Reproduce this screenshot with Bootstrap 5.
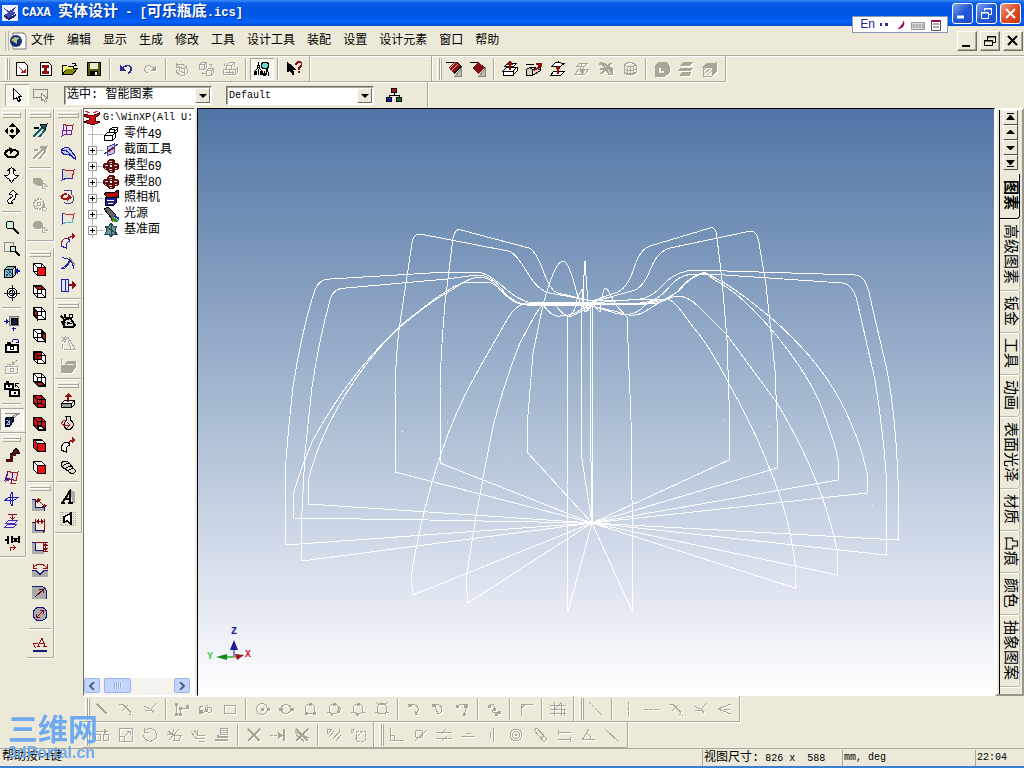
<!DOCTYPE html>
<html lang="zh-CN">
<head>
<meta charset="utf-8">
<meta name="viewport" content="width=device-width, initial-scale=1">
<title>CAXA 实体设计 - [可乐瓶底.ics]</title>
<link href="https://cdn.jsdelivr.net/npm/bootstrap@5.3.0/dist/css/bootstrap.min.css" rel="stylesheet">
<style>
:root{--face:#ece9d8;--shade:#aca899}
body{background:var(--face);color:#000;font:12px/16px "Liberation Mono","Noto Sans CJK SC",monospace;overflow:hidden}
.lat{font-size:10px}
.titlebar{height:26px;background:linear-gradient(#3c8cf8 0,#0a5ce8 12%,#0054e0 50%,#0462fc 85%,#0048c8 100%);color:#fff;font-weight:700;font-size:15px;padding:0 3px 0 2px}
.titlebar .lat{font-size:12px}
.titlebar h1{font:inherit;margin:0;text-shadow:1px 1px 0 #003399;white-space:pre}
.xpbtn{width:21px;height:21px;border:1px solid #fff;border-radius:3px;background:linear-gradient(135deg,#7da4f3,#2458d6 50%,#1c4ccc);color:#fff}
.xpbtn.close-x{background:linear-gradient(135deg,#f0a088,#dd4d28 50%,#c83a14)}
svg{display:block;flex:none}
.ic{width:16px;height:16px;fill:none;stroke:currentColor;shape-rendering:crispEdges}
.menubar{height:30px;border-bottom:1px solid var(--shade);box-shadow:0 1px 0 #fff;padding:0 1px 0 5px}
.menubar a{color:#000;text-decoration:none;padding:0 6px;white-space:nowrap}
.mdibtn{width:20px;height:20px;background:var(--face);border:1px solid;border-color:#fff #716f64 #716f64 #fff;box-shadow:inset -1px -1px 0 var(--shade);border-radius:0}
.hbar{height:26px;padding-right:3px;border-right:1px solid var(--shade);border-bottom:1px solid var(--shade);box-shadow:1px 1px 0 #fff,inset 0 1px 0 #fff}
.hgrip{width:10px;height:22px;padding-left:5px}
.lowbars .hgrip.lead-grip{width:7px;padding-left:2px}
.hgrip::before,.vgrip::before{content:"";display:block;border:1px solid;border-color:#fff var(--shade) var(--shade) #fff}
.hgrip::before{width:5px;height:22px;border-width:0 1px;box-shadow:inset -1px 0 0 #fff}
.hgrip::before{background:linear-gradient(90deg,var(--face) 1px,var(--shade) 1px 2px,#fff 2px)}
.vgrip{height:11px;width:100%;padding:3px 2px 0}
.vgrip::before{height:6px;background:linear-gradient(var(--face) 1px,var(--shade) 1px 2px,#fff 2px 3px,var(--face) 3px)}
.tb{width:24px;height:22px;padding:0;border:0;border-radius:0;display:flex;align-items:center;justify-content:center;flex:none;color:#000}
.tb:disabled{opacity:1;color:#a9a697;border:0}
.tb:disabled svg{filter:drop-shadow(1px 1px 0 #fff)}
.tb.pressed{background:#f6f5ee;box-shadow:inset 1px 1px 0 var(--shade),inset -1px -1px 0 #fff}
.hsep{width:8px;height:22px;padding-left:3px;flex:none}
.hsep::before{content:"";display:block;width:2px;height:100%;border-left:1px solid var(--shade);background:#fff}
.vsep{height:8px;width:100%;padding:3px 2px 0}
.vsep::before{content:"";display:block;height:2px;border-top:1px solid var(--shade);background:#fff}
.vcol{width:28px;padding-top:1px;border-right:1px solid #fff}
.vcol:first-child{width:27px}
.vbar{padding-bottom:2px;border-bottom:1px solid var(--shade);border-right:1px solid var(--shade);box-shadow:0 1px 0 #fff}
.vcol:first-child .vbar{padding-right:2px}
.vbar.spaced{margin-bottom:7px}
.combo{width:148px;height:19px;border:1px solid;border-color:#716f64 #fff #fff #716f64;box-shadow:inset 1px 1px 0 var(--shade);background:#fff}
.combo select{width:100%;height:17px;border:0;padding:0 0 0 2px;font:inherit;line-height:16px;background:transparent;appearance:none;border-radius:0}
.combo select.lat{font-size:10px}
.combo .drop{right:1px;top:1px;width:15px;height:15px;background:var(--face);border:1px solid;border-color:#fff #716f64 #716f64 #fff;pointer-events:none}
.drop::after{content:"";position:absolute;left:3px;top:5px;border:4px solid transparent;border-top-color:#000;border-bottom:0}
.tree{width:112px;background:#fff;border:1px solid;border-color:#716f64 #fff #fff #716f64;overflow:hidden}
.tree ul{margin:0;padding:1px 0 0;list-style:none}
.tree li{height:16px;display:flex;align-items:center;white-space:nowrap;padding-left:4px}
.tree .root{padding:0}
.tree .twig{width:15px;height:16px;background:linear-gradient(90deg,transparent 4px,#bbb 4px 5px,transparent 5px),linear-gradient(transparent 8px,#bbb 8px 9px,transparent 9px)}
.tree .twig b{display:block;width:9px;height:9px;margin-top:4px;border:1px solid #999;background:linear-gradient(#000,#000) 1px 3px/5px 1px no-repeat,linear-gradient(#000,#000) 3px 1px/1px 5px no-repeat,#fff}
.tree li .ic{margin-right:5px}
.tree .root .ic{margin-right:3px}
.tree .lat{font-size:10px}
.tree li .num{font-size:12px;font-family:"Liberation Sans",sans-serif}
.sbar{background:#f4f3ee;height:17px}
.sbtn{width:16px;height:15px;padding:0;border:1px solid #9ab4ee;border-radius:2px;background:#c4d4fc;color:#4d6185;display:flex;align-items:center;justify-content:center}
.thumb{width:27px;height:15px;border:1px solid #98b4f0;border-radius:2px;background:repeating-linear-gradient(90deg,#8ca8ec 0 1px,#e6eefe 1px 2px) center/8px 7px no-repeat,#c4d4fc}
.scene{border:1px solid #000;border-right-color:#fff;border-bottom-color:#fff;background:linear-gradient(#5075a5,#a6b9d1 50%,#dbe2ee 80%,#fff);margin-left:2px}
.scene svg{width:100%;height:100%}
.wire{fill:none;stroke:#fff;stroke-width:1;shape-rendering:crispEdges}
.catalog{width:29px;border:2px solid;border-color:#fff #98958a #98958a #fff;padding-left:2px}
.catalog .strip{border-left:1px solid #000}
.spin{width:15px;height:15px;padding:0;margin-left:3px;background:var(--face);border:1px solid;border-color:#fff #55534b #55534b #fff;border-radius:0;display:flex;align-items:center;justify-content:center}
.vtab{writing-mode:vertical-rl;text-orientation:sideways;width:20px;font-size:15px;line-height:19px;padding:5px 0 6px;border:solid #bdb9aa;border-width:0 1px 1px 0;border-radius:0 0 4px 0;color:#000;background:none;white-space:nowrap;box-shadow:inset -1px 0 0 #fff,0 1px 0 #fff}
.vtab.active{font-weight:700;border-color:#000;padding:6px 0 8px}
.lowbars{margin-left:83px}
.lowbars .hbar{height:26px}
.statusbar{height:18px;padding-left:2px;border-top:1px solid var(--shade)}
.pane{border-left:1px solid var(--shade);padding-left:1px;height:16px;white-space:pre}
.taskedge{height:2px;background:#3a80d0}
.stamp{left:8px;bottom:8px;color:#67a5f2;opacity:.92;font-family:"Liberation Sans","Noto Sans CJK SC",sans-serif;font-weight:700;pointer-events:none}
.stamp div:first-child{font-size:30px;line-height:32px}
.stamp div:last-child{font-size:16px;line-height:14px}
.ime{right:76px;top:16px;height:17px;border:1px solid #8a98b8;background:#fff;color:#2222a0;font:12px/15px "Liberation Sans",sans-serif;padding:0 2px 0 7px;gap:2px}
</style>
</head>
<body class="d-flex flex-column min-vh-100 position-relative">

<svg width="0" height="0" class="position-absolute" aria-hidden="true">
<defs>
<g id="cube"><path d="M1.500 1.500h8l4 4v8h-8l-4-4zM1.500 1.500l4 4h8M5.500 5.500v8M1.500 9.500h8v-8M9.500 9.500l4 4" stroke="#000"/></g>
</defs>
<symbol id="page1" viewBox="0 0 16 16"><path d="M2.500 1.500h8l3 3v10h-11z" fill="#fff"/><path d="M4 6l3 1 2 3 3-3v5H7l1-2z" fill="#c01818" stroke="none"/></symbol>
<symbol id="page2" viewBox="0 0 16 16"><path d="M2.500 1.500h8l3 3v10h-11z" fill="#fff"/><path d="M4 4h7v3H9v3h2v3H4v-3h2V7H4z" fill="#8c1010" stroke="none"/></symbol>
<symbol id="open" viewBox="0 0 16 16"><path d="M.500 13.500v-9h4l1 1h6v3"/><path d="M.500 13.500l4-6h11l-5 6z" fill="#848400"/><path d="M1 5h4l1 1h5v2H4l-3 4z" fill="#ffff84" stroke="none"/><path d="M9.500 2.500h4v2M12 4h3"/></symbol>
<symbol id="save" viewBox="0 0 16 16"><path d="M1.500 1.500h13v13h-13z" fill="#555a00"/><path d="M4 2h8v6H4z" fill="#ece9d8" stroke="none"/><path d="M4 10h8v4H4z" fill="#000" stroke="none"/><path d="M9 11h2v3H9z" fill="#fff" stroke="none"/></symbol>
<symbol id="undo" viewBox="0 0 16 16"><path d="M4 7q7-5 9 0 1 4-3 5" stroke="#2c2c90" stroke-width="1.500"/><path d="M2 4v6h6z" fill="#2c2c90" stroke="none"/></symbol>
<symbol id="redo" viewBox="0 0 16 16"><path d="M12 7q-7-5-9 0-1 4 3 5"/><path d="M14 4v6H8z" fill="currentColor" stroke="none"/></symbol>
<symbol id="spinbox" viewBox="0 0 16 16"><path d="M2 2v4h4M2 5q5-4 9 0 5 6 0 9-7 2-9-5M5 6l5 2v4l-4-2zM10 8l3-3"/></symbol>
<symbol id="boxes" viewBox="0 0 16 16"><path d="M1.500 3.500h5v5h-5zM1.500 3.500l2-2h5l-2 2M8.500 1.500v5l-2 2M8.500 9.500h5v5h-5zM8.500 9.500l2-2h5l-2 2M15.500 7.500v5l-2 2M10.500 3.500h3v2M4.500 10.500v2h3"/></symbol>
<symbol id="boxes2" viewBox="0 0 16 16"><path d="M4.500 4.500h5v4h-5zM4.500 4.500l3-3h5l-3 3M12.500 1.500v4M1.500 8.500h6v5h-6zM7.500 8.500h6v5h-6zM13.500 8.500l2-2v5l-2 2M1.500 5.500l2-3M3 11h9M10 10v3"/></symbol>
<symbol id="finder" viewBox="0 0 16 16"><path d="M4.500 1v3M3.500 4.500h2v2h-2zM3.500 7l-2 3v4M5.500 7l2 3v4M.500 10.500h2v3h-2zM6.500 10.500h2v3h-2zM4.500 8v6M10.500 10v4M12.500 9v5M9.500 12.500h2v2h-2zM14 11v4"/><circle cx="11" cy="4.500" r="3.500" fill="#6ad4d0"/><path d="M13 8v3" stroke-width="2"/></symbol>
<symbol id="ask" viewBox="0 0 16 16"><path d="M1 1v10l3-2 3 5 1-1-2-5h3z" fill="#000"/><path d="M10 4q0-3 3-3t3 3l-3 3v2M13 10v2" stroke="#8c1010" stroke-width="2"/></symbol>
<symbol id="cyl1" viewBox="0 0 16 16"><path d="M15.500 7v8H9z" fill="#b9b5a8" stroke="#888"/><path d="M0 1.500h11l4 4-7 7V8" fill="none"/><path d="M8 1l-6 6 5 5 7-7-3-4z" fill="#8c1818" stroke="none"/><path d="M3 8l6-6M5 10l7-7" stroke="#e8a0a0"/></symbol>
<symbol id="cyl2" viewBox="0 0 16 16"><path d="M15.500 7v8H9z" fill="#b9b5a8" stroke="#888"/><path d="M0 1.500h8"/><path d="M2 7l6-6 7 5-7 7z" fill="#801414" stroke="none"/></symbol>
<symbol id="extr" viewBox="0 0 16 16"><path d="M1 10l4-4h10l-4 4zM1 10v4h10v-4M11 14l4-4V6M3 5l3-3h9l-3 3z" fill="#fff"/><path d="M8 9V2M6 4l2-3 2 3" stroke="#8c1010" stroke-width="2"/></symbol>
<symbol id="swp" viewBox="0 0 16 16"><path d="M0 3.500h8M.500 8.500l3-2 3 2v6h-6zM3.500 6.500l6 0 5 3-8 5M6.500 8.500l8-2v3" fill="#d5d2c4"/><path d="M8 9q5-1 6-7M10 2.500h4.500V6" stroke="#8c1010" stroke-width="2"/></symbol>
<symbol id="loft" viewBox="0 0 16 16"><path d="M2 5l3-3q4-2 6 0h4l-4 3q-4 2-5 0zM1 14l3-4h11l-4 4z" fill="#fff"/><path d="M8 13V5M6 8l2-2 2 2" stroke="#8c1010" stroke-width="2"/></symbol>
<symbol id="loft2" viewBox="0 0 16 16"><path d="M3 5l3-3h8l-3 3zM1 13l4-5h10l-4 5zM11 5l-5 5M8 2l-2 6"/><path d="M6 9l5 0-3 4z" fill="currentColor"/></symbol>
<symbol id="cross" viewBox="0 0 16 16"><path d="M1 3h6l7 5v6M3 1l9 13M13 2L3 13M2 8h10M8 4l6 8" stroke-width="2"/></symbol>
<symbol id="drum" viewBox="0 0 16 16"><path d="M2 4q6-5 12 0v8q-6 4-12 0zM2 4q6 4 12 0M5 5v9M8 6v9M11 5v9M2 8q6 4 12 0M2 11q6 4 12 0"/></symbol>
<symbol id="solid" viewBox="0 0 16 16"><path d="M1 5l4-4h7l3 4v7l-4 3H1zM4 6v6h6V9H7V6z" fill-rule="evenodd" fill="currentColor"/></symbol>
<symbol id="stack" viewBox="0 0 16 16"><path d="M3 4l3-3h9l-3 3zM1 9l2-2h12l-2 2zM2 14l3-3h8l-2 4z" fill="currentColor"/></symbol>
<symbol id="hatch" viewBox="0 0 16 16"><path d="M1 6l4-4h9v9l-4 4H1z"/><path d="M10 6l4-4v9l-4 4zM5 2h9l-4 4H1z" fill="currentColor"/><path d="M2 13l7-6M5 14l5-5M2 9l2-2"/></symbol>
<symbol id="ptr" viewBox="0 0 16 16"><path d="M4.500 1.500v11l3-2 2 4 2-1-2-4h3z" fill="#fff"/></symbol>
<symbol id="rectptr" viewBox="0 0 16 16"><path d="M.500 2.500h14v8h-14z" stroke="#8d8a80"/><path d="M8.500 6.500v7l2-1 2 3 1-1-1-3h2z" fill="#fff" stroke="#8d8a80"/></symbol>
<symbol id="org" viewBox="0 0 16 16"><path d="M8 5v4M3 11V8h10v3"/><path d="M5.500 1.500h5v4h-5z" fill="#a01818"/><path d="M.500 10.500h5v4h-5z" fill="#1818c0"/><path d="M10.500 10.500h5v4h-5z" fill="#187018"/></symbol>
<!-- view navigation -->
<symbol id="pan" viewBox="0 0 16 16"><path d="M8 0L4 4h8zM8 16l-4-4h8zM0 8l4-4v8zM16 8l-4-4v8z" fill="#000" stroke="none"/><path d="M6 8h4M8 6v4" stroke-width="2"/></symbol>
<symbol id="orbit" viewBox="0 0 16 16"><path d="M10 5q5 1 4 4-2 4-7 3-6 0-6-4 1-3 5-3" stroke-width="2"/><path d="M5 2l6 3-5 4z" fill="#000" stroke="none"/></symbol>
<symbol id="dolly" viewBox="0 0 16 16"><path d="M5.500 6.500v-3h-2l4-3 4 3h-2v3l2 2h3l-3 3h-1l-3 4-3-4h-1l-3-3h3z" fill="#fff"/></symbol>
<symbol id="walk" viewBox="0 0 16 16"><path d="M6 15q-4-2-1-5l3-2q2-2-3-3l4-4 4 4h-2q2 4-2 6-3 2 0 3z" fill="#fff"/></symbol>
<symbol id="zoom" viewBox="0 0 16 16"><circle cx="6" cy="6" r="4" fill="#c9ecd8"/><path d="M9 9l6 6" stroke-width="2"/></symbol>
<symbol id="zoomwin" viewBox="0 0 16 16"><path d="M.500 1.500h9v9h-9z" stroke="#908d84"/><circle cx="9" cy="8" r="3" fill="#c9ecd8"/><path d="M11 10l5 5" stroke-width="2"/></symbol>
<symbol id="boxarrow" viewBox="0 0 16 16"><path d="M.500 6.500h8v8h-8zM.500 6.500l3-3h8l-3 3M8.500 14.500l3-3v-8" fill="#7fc0c8"/><path d="M2 8l5 5M2 11l2 2M4 7l4 4M2 13l5-5" stroke="#204080"/><path d="M16 8h-4" stroke="#18189a" stroke-width="2"/><path d="M10 8l4-4v8z" fill="#18189a" stroke="none"/></symbol>
<symbol id="target" viewBox="0 0 16 16"><circle cx="8" cy="8" r="5" fill="#fff"/><circle cx="8" cy="8" r="2.500"/><path d="M8 0v16M0 8h16" stroke="#224"/></symbol>
<symbol id="fit" viewBox="0 0 16 16"><path d="M5.500 1.500h9v9h-9z" fill="#bbb" stroke="#777"/><path d="M7 3h6v6H7z" fill="#102040"/><path d="M0 6.500h4M9.500 16v-4M8 13.500h4" stroke="#18189a"/><path d="M2 4l3 2.500L2 9z" fill="#18189a" stroke="none"/></symbol>
<symbol id="cam" viewBox="0 0 16 16"><path d="M1.500 7.500h12v7h-12zM3 5.500h3v2" stroke-width="2" fill="#fff"/><circle cx="8" cy="11" r="2"/><path d="M8 5q0-4 6-2v3M12 5h3" stroke="#18189a"/></symbol>
<symbol id="camg" viewBox="0 0 16 16"><path d="M1.500 7.500h12v7h-12zM3 5h3v2M8 5l6-4M8 2v3h3"/><circle cx="8" cy="11" r="2"/></symbol>
<symbol id="cam2" viewBox="0 0 16 16"><path d="M1 3h8v5H1zM6 9h9v6H6zM2 1h3" stroke-width="2" fill="#fff"/><circle cx="5" cy="5" r="1"/><circle cx="11" cy="12" r="1"/><path d="M15 7l-4-4M11.500 6V2.500H15"/></symbol>
<symbol id="persp" viewBox="0 0 16 16"><path d="M1 2.500h14l-6 5M15 2L4 8" stroke="#888"/><path d="M1 8l3-2h5v5l-3 4H1z" fill="#182048"/><path d="M2 9h4v5H2z" fill="#9fb4d8" stroke="none"/><path d="M2 10l3 3M5 9l-3 4" stroke="#182048"/></symbol>
<symbol id="crank" viewBox="0 0 16 16"><path d="M2 13h5V7h5" stroke="#501010" stroke-width="3"/><path d="M8 6l4-5 4 5z" fill="#701010"/></symbol>
<symbol id="surf" viewBox="0 0 16 16"><path d="M4 2l5 2 5-1-2 9-5-2-5 2z" fill="#f1d7d7" stroke="#a02030"/><path d="M4 2L1 11l5-2M9 4L7 15" stroke="#2020b0"/><path d="M6 14l6 0" stroke="#c02020"/></symbol>
<symbol id="planes" viewBox="0 0 16 16"><path d="M1 9l5-3h9l-5 3zM8 1v14l-2-4V5z" stroke="#2020b0" fill="#e7e4f6"/></symbol>
<symbol id="plane3" viewBox="0 0 16 16"><path d="M4 1.500h9M8.500 1v5M6 4l2.500 2L11 4" stroke="#901030"/><path d="M1 14l3-3h9l-3 3zM2 10l3-3h9l-3 3z" stroke="#4030b0" fill="#eae2f4"/></symbol>
<symbol id="fx" viewBox="0 0 16 16"><path d="M5 1.500H3.500V9M1 4.500h4M7.500 1v7M10 3l3 4M13 3l-3 4M15 1v7" stroke-width="2"/><path d="M6.500 15.500v-3h4M9 10l2 2.500L9 15" stroke="#8c1010"/></symbol>
<!-- constraints and snapping -->
<symbol id="dart" viewBox="0 0 16 16"><path d="M1 14L11 4M7 14l6-7" stroke="#106070" stroke-width="2"/><path d="M8 2l7-1-2 6z" fill="#106070"/><path d="M2 4.500h5" stroke="#000" stroke-width="2"/></symbol>
<symbol id="dartg" viewBox="0 0 16 16"><path d="M1 14L11 4M7 14l6-7M2 4.500h4" stroke-width="2"/><path d="M8 2l7-1-2 6z" fill="currentColor"/></symbol>
<symbol id="blob" viewBox="0 0 16 16"><path d="M2 3h5l3 2v5H5L1 7z" fill="currentColor"/><path d="M10 7v7l2-1 2 2M10 7l5 4h-3"/></symbol>
<symbol id="ball" viewBox="0 0 16 16"><ellipse cx="6" cy="6" rx="5" ry="4" fill="currentColor"/><path d="M10 7v7l2-1 2 2M10 7l5 4h-3"/></symbol>
<symbol id="gear" viewBox="0 0 16 16"><circle cx="7" cy="7" r="5" stroke-dasharray="2 1" stroke-width="2"/><circle cx="7" cy="7" r="2"/><path d="M10 8v6l2-1 2 2M10 8l5 4"/></symbol>
<symbol id="c1" viewBox="0 0 16 16"><path d="M1.500 1.500h8l4 4v8h-8l-4-4z" fill="#fff"/><use href="#cube"/><path d="M6 6h7v7H6z" fill="#f01010" stroke="none"/></symbol>
<symbol id="c2" viewBox="0 0 16 16"><path d="M1.500 1.500h8l4 4v8h-8l-4-4z" fill="#fff"/><path d="M2 2h8l3 3H5z" fill="#b81818"/><use href="#cube"/></symbol>
<symbol id="c3" viewBox="0 0 16 16"><path d="M1.500 1.500h8l4 4v8h-8l-4-4z" fill="#fff"/><path d="M2 2l3 4v7l-3-4z" fill="#b81818"/><use href="#cube"/></symbol>
<symbol id="c4" viewBox="0 0 16 16"><path d="M1.500 1.500h8l4 4v8h-8l-4-4z" fill="#fff"/><path d="M10 2l3 4v7l-3-4z" fill="#b81818"/><use href="#cube"/></symbol>
<symbol id="c5" viewBox="0 0 16 16"><path d="M1.500 1.500h8l4 4v8h-8l-4-4z" fill="#fff"/><path d="M2 2h7v7H2z" fill="#c01010"/><use href="#cube"/></symbol>
<symbol id="c6" viewBox="0 0 16 16"><path d="M1.500 1.500h8l4 4v8h-8l-4-4z" fill="#fff"/><path d="M2 10h7l4 4H6z" fill="#b81818"/><use href="#cube"/></symbol>
<symbol id="c7" viewBox="0 0 16 16"><path d="M1.500 1.500h8l4 4v8h-8l-4-4z" fill="#c81414"/><use href="#cube"/></symbol>
<symbol id="c8" viewBox="0 0 16 16"><path d="M1.500 1.500h8l4 4v8h-8l-4-4z" fill="#c81414"/><path d="M6 10h4l3 4H6z" fill="#fff"/><use href="#cube"/></symbol>
<symbol id="c9" viewBox="0 0 16 16"><path d="M1.500 1.500h8l4 4v8h-8l-4-4z" fill="#e01414"/><path d="M2 2h8l3 3H5z" fill="#fff"/><path d="M1.500 1.500h8l4 4v8h-8l-4-4zM1.500 1.500l4 4h8M5.500 5.500v8"/></symbol>
<symbol id="c10" viewBox="0 0 16 16"><path d="M1.500 1.500h8l4 4v8h-8l-4-4z" fill="#fff"/><path d="M5.500 5.500h8v8h-8z" fill="#f01010"/><path d="M1.500 1.500h8l4 4v8h-8l-4-4zM1.500 1.500l4 4h8M5.500 5.500v8"/></symbol>
<symbol id="dim1" viewBox="0 0 16 16"><path d="M0 3h3v9h10v3H0z" fill="#aaa" stroke="none"/><path d="M0 3.500h3.500v8h9V15" stroke="#18187a"/><path d="M5 3l8 8M4 6l3-4M11 12l4-3" stroke="#8c1010"/><path d="M5 3h4L5 7zM13 11V7l-4 4z" fill="#8c1010" stroke="none"/></symbol>
<symbol id="dim2" viewBox="0 0 16 16"><path d="M0 4h3v8h9v3H0z" fill="#aaa" stroke="none"/><path d="M0 4.500h3.500v8h8V15" stroke="#18187a"/><path d="M3.500 1v6M12.500 1v13M3 3.500h9" stroke="#8c1010"/><path d="M4 3.500L7 1v5zM12 3.500L9 1v5z" fill="#8c1010" stroke="none"/></symbol>
<symbol id="dim3" viewBox="0 0 16 16"><path d="M0 3h3v8h9v3H0z" fill="#aaa" stroke="none"/><path d="M0 2.500h3.500v8h8v-8" stroke="#18187a"/><path d="M4 2.500h12M11 11.500h5M13.500 3v9" stroke="#8c1010"/><path d="M13.500 3l2.500 3h-5zM13.500 11L16 8h-5z" fill="#8c1010" stroke="none"/></symbol>
<symbol id="dim4" viewBox="0 0 16 16"><path d="M0 8h5l3 4 4-4h4v7H0z" fill="#aaa" stroke="none"/><path d="M0 8.500h4l4 4 4-4h4" stroke="#18187a"/><path d="M1 6q7-8 14 0M1 2v4h4M15 2v4h-4" stroke="#8c1010"/></symbol>
<symbol id="dim5" viewBox="0 0 16 16"><path d="M0 3h8q6 0 6 6v6H0z" fill="#aaa" stroke="none"/><path d="M0 2.500h9q5.500 1 5.500 6V15" stroke="#18187a"/><path d="M3 13l8-7M7 5.500h4.500V9" stroke="#501010"/></symbol>
<symbol id="dim6" viewBox="0 0 16 16"><circle cx="8" cy="8" r="7" fill="#aaa" stroke="#18187a"/><path d="M4 12l8-8M8 4.500h3.500V8M4.500 8v3.500H8" stroke="#8c1010"/></symbol>
<symbol id="dimA" viewBox="0 0 16 16"><path d="M1 14.500h14" stroke="#18187a" stroke-width="2"/><path d="M6 10l4-8 3 8M8 7.500h4M5 10.500h3M11 10.500h4M1 7.500h5M1.500 7.500l2 5" stroke="#8c1010"/></symbol>
<!-- surfaces and solids -->
<symbol id="s1" viewBox="0 0 16 16"><path d="M4 1l3 2 6-1-2 10-5-1-4 2zM7 3L6 11M3 7l4 1 5-1" stroke="#6a2098" fill="#eee4f2"/><path d="M4 1l3 2 6-1-1 5" stroke="#a02040"/></symbol>
<symbol id="s2" viewBox="0 0 16 16"><path d="M1 6q3-5 8-3l6 8v3l-4-3q-3-3-7-1z" fill="#b9c8ea" stroke="#2020a0"/><path d="M1 6q4-2 7 1l6 7" stroke="#2020a0"/></symbol>
<symbol id="s3" viewBox="0 0 16 16"><path d="M3 2l4 2 7-1-2 9-5-1-5 2z" fill="#ddd8cc" stroke="#2020b0"/><path d="M3 2l4 2 7-1M12 12l2-9" stroke="#b02020"/></symbol>
<symbol id="s4" viewBox="0 0 16 16"><path d="M4 1.500h7v3q5 5 1 9-5 3-8 0" stroke="#404090"/><path d="M2 8q0-3 5-3M1 7q1 5 9 2" stroke="#a01818" stroke-width="2"/><path d="M8 5l4 4-5 3z" fill="#a01818" stroke="none"/></symbol>
<symbol id="s5" viewBox="0 0 16 16"><path d="M3 2l4 2 7-1-2 9-5-1-5 2z" stroke="#50b8c8"/><path d="M3 2L2 13" stroke="#2020b0"/><path d="M3 2l4 2 7-1-1 5" stroke="#c03030"/></symbol>
<symbol id="s6" viewBox="0 0 16 16"><path d="M1 13q0-8 7-8l2 3q-4 1-4 7z" fill="#eee" stroke="#2020b0"/><path d="M1 13q0-8 7-8l5-2" stroke="#a01818"/><path d="M12 0l4 3-4 3z" fill="#a01818" stroke="none"/></symbol>
<symbol id="s7" viewBox="0 0 16 16"><path d="M2 3q10-1 12 11M2 13q6-2 8-9M5 13q3-3 6-8M1 13h4" stroke="#2020b0"/><path d="M9 2l6 8" stroke="#888"/></symbol>
<symbol id="s8" viewBox="0 0 16 16"><path d="M1.500 2.500h7v12h-7zM5.500 2v12" stroke="#2020b0" fill="#dfe4f4"/><path d="M9 8h4" stroke="#8c1010" stroke-width="2"/><path d="M12 4l4 4-4 4z" fill="#8c1010" stroke="none"/></symbol>
<symbol id="k1" viewBox="0 0 16 16"><path d="M4 7l6-2 5 7-2 2H4zM1 3l3 3M5 1v4M1 9h4M2 12l3-3M8 4l-2 3" fill="#ddd" stroke-width="2"/><circle cx="11" cy="3" r="2" fill="#fff"/><path d="M7 9l5 2M7 12l2-3"/></symbol>
<symbol id="k2" viewBox="0 0 16 16"><path d="M1 2l5 3M6 1L2 7M4 8l4-6 7 12H4M8 5l3 9M2 9l1 5"/></symbol>
<symbol id="k3" viewBox="0 0 16 16"><path d="M1 8h4l3-4h7v7l-3 4H1zM1 2v5" fill="currentColor"/><path d="M6 7h8" stroke="#ece9d8"/></symbol>
<symbol id="t1" viewBox="0 0 16 16"><path d="M1.500 10.500l3-3h10l-3 3zM11.500 10.500l3-3v4l-3 3z" fill="#fff"/><path d="M1.500 10.500h10v4h-10z" fill="#999"/><path d="M8 9V3" stroke="#8c1010" stroke-width="2"/><path d="M8 0l4 4H4z" fill="#8c1010" stroke="none"/></symbol>
<symbol id="t2" viewBox="0 0 16 16"><path d="M5 1.500h6M6.500 2v3q-5 5 0 9h4q6-4 0-9V2" fill="#ddd"/><path d="M2 8q0-3 5-3M1 7q2 5 8 3M7 7l3 3-3 3" stroke="#a01818"/></symbol>
<symbol id="t3" viewBox="0 0 16 16"><path d="M1 13q0-8 7-8l2 3q-4 1-4 7z" fill="#eee"/><path d="M9 5l4-2" stroke="#a01818" stroke-width="2"/><path d="M12 0l4 3-4 3z" fill="#a01818" stroke="none"/></symbol>
<symbol id="t4" viewBox="0 0 16 16"><path d="M1 4q3-3 7-1l7 8q1 3-3 4L5 10q-4-2-4-6z" fill="#ddd"/><path d="M3 7q2-3 7-2M5 10q2-3 7-2M8 12q2-3 6-2"/></symbol>
<symbol id="ta" viewBox="0 0 16 16"><path d="M11 1l4 2v11h-3z" fill="#aaa" stroke="none"/><path d="M3 13l7-11v11M5 9.500h5M1 13.500h4M8 13.500h5" stroke-width="2"/></symbol>
<symbol id="th" viewBox="0 0 16 16"><path d="M.500 1v14M2.500 1v14M13.500 1v14M15.500 1v14M1 1.500h14M1 14.500h14M5.500 1v14M11.500 1v14" stroke="#aaa" stroke-dasharray="1 1"/><path d="M4 6l7-4v11l-4-3-3 1z" fill="#fff" stroke-width="1.500"/></symbol>
<!-- tree -->
<symbol id="scene" viewBox="0 0 16 16"><path d="M0 4l8 2 7-3v2l-4 3v3l5 1-7 3-9-3 5-2V8L0 6z" fill="#d01010" stroke="#400"/><path d="M1 1l5 2M14 1l-5 2" stroke="#c33"/></symbol>
<symbol id="part" viewBox="0 0 16 16"><path d="M1.500 9.500l3-3h2v-3l3-2h5v4l-2 2v4l-3 3h-8zM1.500 9.500h8v5M9.500 9.500l3-3M6.500 6.500h4l4-4M6.500 3.500h5l0 3" fill="#fff"/></symbol>
<symbol id="sect" viewBox="0 0 16 16"><path d="M4 5l7-3v9l-7 3z" fill="#c9bcec" stroke="#55408c"/><path d="M1 12L15 2" stroke="#203060"/><path d="M5 10l6-4" stroke="#a01818"/></symbol>
<symbol id="model" viewBox="0 0 16 16"><path d="M6 1h4l2 2v2l-2 2H6L4 5V3zM1 5h3l3 2v3l-2 2H2L0 9V6zM11 5h3l2 2v3l-2 2h-3L9 9V7zM6 9h4l2 2v2l-2 2H6l-2-2v-2z" fill="#5c1010" stroke="none"/><path d="M6 3h3M2 7h3M11 7h3M6 11h3M7 5h2M2 10h1M12 10h2M7 13h2" stroke="#e9c4c4"/></symbol>
<symbol id="camera" viewBox="0 0 16 16"><path d="M1 4l3-2h8l3-2v7H4z" fill="#b01010"/><path d="M2 8l11-1v6l-2 2H2z" fill="#2020a0"/><path d="M4 10.500h7M5 13.500h5" stroke="#fff"/></symbol>
<symbol id="light" viewBox="0 0 16 16"><path d="M1 3l4-2 8 8-4 4z" fill="#666"/><path d="M9 13l5 3M10 12l5 3" stroke="#20a020" stroke-width="2"/><path d="M12 10l4 3" stroke="#2020d0" stroke-width="2"/><path d="M8 13l2 3" stroke="#d02020"/></symbol>
<symbol id="datum" viewBox="0 0 16 16"><path d="M8 1l2 3h4l-2 4 2 4h-4l-2 3-2-3H2l2-4-2-4h4z" fill="#6c9498" stroke="#20484c"/><path d="M8 1v14M2 4l12 8" stroke="#20484c"/></symbol>
<!-- 2D drawing -->
<symbol id="d1" viewBox="0 0 16 16"><path d="M3 3l10 10" stroke-width="1.500"/></symbol>
<symbol id="d2" viewBox="0 0 16 16"><path d="M1 3.500h4l8 8M10 4L4 10M11 13.500h2M14 14.500h1"/></symbol>
<symbol id="d3" viewBox="0 0 16 16"><path d="M15 2L9 8M9 9.500H3M8 8L2 5M9 8l3 4"/></symbol>
<symbol id="d4" viewBox="0 0 16 16"><path d="M2.500 3v10.500h4v-6h8V4"/><path d="M1 2h3v3H1zM1 12h3v3H1zM5 12h3v3H5zM5 6h3v3H5zM12 4h3v3h-3z" fill="currentColor" stroke="none"/></symbol>
<symbol id="d5" viewBox="0 0 16 16"><path d="M2 10q3 4 6-1t6-1q0 5-4 3-5-4 0-7M5 5q-5 1-3 5"/><path d="M1 9h3v3H1zM7 8h2v2H7z" fill="currentColor"/></symbol>
<symbol id="d6" viewBox="0 0 16 16"><path d="M2.500 4.500h11v8h-11z"/></symbol>
<symbol id="r1" viewBox="0 0 16 16"><circle cx="8" cy="8" r="5.500"/><path d="M7 7h2v2H7zM13 7h2v2h-2z" fill="currentColor"/></symbol>
<symbol id="r2" viewBox="0 0 16 16"><ellipse cx="8" cy="8" rx="5" ry="4.500"/><path d="M1 7h3v2H1zM12 7h3v2h-3z" fill="currentColor"/></symbol>
<symbol id="r3" viewBox="0 0 16 16"><circle cx="8" cy="8" r="5"/><path d="M7 2h2v2H7zM3 11h2v2H3zM11 11h2v2h-2z" fill="currentColor"/></symbol>
<symbol id="r4" viewBox="0 0 16 16"><circle cx="8" cy="8" r="5"/><path d="M7 2h2v2H7zM11 9h2v2h-2z" fill="currentColor"/><path d="M1 11.500h3l3 3M13 6l2 3"/></symbol>
<symbol id="r5" viewBox="0 0 16 16"><circle cx="8" cy="8" r="5"/><path d="M7 2h2v2H7z" fill="currentColor"/><path d="M1 11.500h4l3 3M11 11.500h4M8.500 13v2"/></symbol>
<symbol id="r6" viewBox="0 0 16 16"><circle cx="8" cy="8" r="5"/><path d="M2 1l3 3M14 1l-3 3M1 11.500h3.500V14M15 11.500h-3.500V14M5 2.500h6"/></symbol>
<symbol id="a1" viewBox="0 0 16 16"><path d="M3 4q7-2 9 3 1 4-3 6M9 10v3h3"/><path d="M2 3h3v2H2z" fill="currentColor"/></symbol>
<symbol id="a2" viewBox="0 0 16 16"><path d="M3 4q7-2 9 3 0 5-4 6L5 5M6 8l2 5"/><path d="M2 3h3v2H2z" fill="currentColor"/></symbol>
<symbol id="a3" viewBox="0 0 16 16"><path d="M3 5q5-3 9-1 1 4-2 9"/><path d="M10 3h3v3h-3zM2 4h2v2H2zM9 12h2v2H9z" fill="currentColor"/></symbol>
<symbol id="sp" viewBox="0 0 16 16"><path d="M3 5q3-4 5 0t-2 5q4 4 7 0"/><path d="M2 4h2v2H2zM7 7h2v2H7zM12 10h2v2h-2zM9 12h2v2H9z" fill="currentColor"/></symbol>
<symbol id="fil" viewBox="0 0 16 16"><path d="M3.500 15V3.500H15M3 10q1-6 7-7"/></symbol>
<symbol id="grid" viewBox="0 0 16 16"><path d="M0 4.500h16M0 8.500h16M0 12.500h16M4.500 1v14M11.500 1v14M4 9l8-8M14 9v6"/></symbol>
<symbol id="dash1" viewBox="0 0 16 16"><path d="M1 1l14 14" stroke-dasharray="3 1"/></symbol>
<symbol id="dash2" viewBox="0 0 16 16"><path d="M8.500 1v14" stroke-dasharray="4 1"/></symbol>
<symbol id="dash3" viewBox="0 0 16 16"><path d="M0 8.500h16" stroke-dasharray="4 1"/></symbol>
<symbol id="ang" viewBox="0 0 16 16"><path d="M15 3L2 8l13 5M8 8.500h6"/></symbol>
<symbol id="e1" viewBox="0 0 16 16"><path d="M1.500 7.500h5v6h-5zM9.500 7.500h5v6h-5zM2 4.500h9"/><path d="M10 2l4 2.500L10 7z" fill="currentColor" stroke="none"/></symbol>
<symbol id="e2" viewBox="0 0 16 16"><path d="M1.500 1.500h13v13h-13zM1.500 9.500h5v5M7 9l5-5M9 4.500h3.500V8"/></symbol>
<symbol id="e3" viewBox="0 0 16 16"><path d="M3 4q5-5 10 0 4 6-1 9-5 3-9-1l-2-4M2.500 1v4.500H7"/></symbol>
<symbol id="e4" viewBox="0 0 16 16"><path d="M3 13L13 2M1 7.500h5L8 2M2 4l4 3M8 13.500h5l2-5H9z"/></symbol>
<symbol id="e5" viewBox="0 0 16 16"><path d="M1 5l5 6.500h9M4 3l4 5.500h7M7 3v5M9 14.500h6"/></symbol>
<symbol id="e6" viewBox="0 0 16 16"><path d="M6.500 1.500h7v6h-7zM7 3.500h6M7 5.500h6"/><path d="M3 10h11M1 13h13" stroke-width="2"/><path d="M3 8l3 2" /></symbol>
<symbol id="xx" viewBox="0 0 16 16"><path d="M2 2l12 12M14 2L2 14" stroke-width="1.500"/></symbol>
<symbol id="ext" viewBox="0 0 16 16"><path d="M0 8.500h10" stroke-dasharray="3 1"/><path d="M14 2v12" stroke-width="2"/><path d="M8 5l5 3.500L8 12z" fill="currentColor" stroke="none"/></symbol>
<symbol id="xx2" viewBox="0 0 16 16"><path d="M2 2l12 12M14 2L2 14M1 5l14 6M2 8l8 6" stroke-width="1.500"/></symbol>
<symbol id="pr1" viewBox="0 0 16 16"><path d="M1 2h5L2 7zM3 10l5-6M7 12l7-8M10 14l5-6M13 2v4"/></symbol>
<symbol id="pr2" viewBox="0 0 16 16"><path d="M1 2h4L2 6zM6 4h9v10H6zM5 12l7-7" stroke-dasharray="3 1"/></symbol>
<symbol id="q1" viewBox="0 0 16 16"><path d="M2.500 1v12.500H16M2 8.500h4.500v5"/></symbol>
<symbol id="q2" viewBox="0 0 16 16"><circle cx="7" cy="7" r="4"/><path d="M3 14L15 3"/></symbol>
<symbol id="q3" viewBox="0 0 16 16"><path d="M0 5.500h16M0 11.500h16M5 7l5-5M6 14l5-5"/></symbol>
<symbol id="q4" viewBox="0 0 16 16"><path d="M1 9.500h14M6 6.500h5"/></symbol>
<symbol id="q5" viewBox="0 0 16 16"><path d="M9.500 1v14M6.500 5v6"/></symbol>
<symbol id="q6" viewBox="0 0 16 16"><circle cx="8" cy="8" r="6"/><circle cx="8" cy="8" r="3.500"/><circle cx="8" cy="8" r="1"/></symbol>
<symbol id="q7" viewBox="0 0 16 16"><path d="M2 3l3-2 10 11-3 3zM6 3l3 3M5 7l4 4 3-2"/></symbol>
<symbol id="q8" viewBox="0 0 16 16"><path d="M2 5.500h13M2 12.500h13M2 3v5M14 10v5"/></symbol>
<symbol id="q9" viewBox="0 0 16 16"><path d="M2 13L9 2M2 12.500h13M7 6q4 3 4 7"/></symbol>
<symbol id="q10" viewBox="0 0 16 16"><path d="M1 2l14 13"/></symbol>
</svg>

<header class="titlebar d-flex align-items-center">
  <svg class="ic me-1" viewBox="0 0 16 16"><path d="M0 0h16v16H0z" fill="#e9edff" stroke="none"/><path d="M2 3l5 3 7-4-3 5 3 1-7 5-5-3 4-2z" fill="#3c4ab0" stroke="none"/><path d="M2 11l5 3 7-4" stroke="#20206c" stroke-width="2"/></svg>
  <h1><span class="lat">CAXA </span>实体设计<span class="lat"> - [</span>可乐瓶底<span class="lat">.ics]</span></h1>
  <div class="d-flex ms-auto" style="gap:3px">
    <button class="btn p-0 xpbtn" aria-label="最小化"><svg viewBox="0 0 19 19"><path d="M4 13h7" stroke="#fff" stroke-width="3"/></svg></button>
    <button class="btn p-0 xpbtn" aria-label="还原"><svg viewBox="0 0 19 19" fill="none" stroke="#fff"><path d="M7.500 7V4.500h7v6H12M4.500 8.500h7v6h-7zM7 5h8M4 9h8"/></svg></button>
    <button class="btn p-0 xpbtn close-x" aria-label="关闭"><svg viewBox="0 0 19 19"><path d="M5 5l9 9M14 5l-9 9" stroke="#fff" stroke-width="2"/></svg></button>
  </div>
</header>

<nav class="menubar d-flex align-items-center" aria-label="菜单">
  <svg width="22" height="20" viewBox="0 0 22 20"><path d="M.5 0v20M3.500 0v20" stroke="#bdb9aa"/><path d="M8 2h11l2 3v13H8z" fill="#fff" stroke="#777"/><circle cx="11" cy="10" r="6" fill="#18307c"/><path d="M6 9l4-3 5 1-3 2v4l-3-2z" fill="#b9c870"/></svg>
  <a href="#" class="ps-1">文件</a><a href="#">编辑</a><a href="#">显示</a><a href="#">生成</a><a href="#">修改</a><a href="#">工具</a><a href="#">设计工具</a><a href="#">装配</a><a href="#">设置</a><a href="#">设计元素</a><a href="#">窗口</a><a href="#">帮助</a>
  <div class="d-flex ms-auto" style="gap:3px">
    <button class="btn p-0 mdibtn" aria-label="最小化文档"><svg viewBox="0 0 18 18"><path d="M4 14h8" stroke="#000" stroke-width="2"/></svg></button>
    <button class="btn p-0 mdibtn" aria-label="还原文档"><svg viewBox="0 0 18 18" fill="none" stroke="#000"><path d="M6.500 8V4.500h8v6H12M3.500 8.500h8v5h-8zM6 5h9M3 9h9"/></svg></button>
    <button class="btn p-0 mdibtn" aria-label="关闭文档"><svg viewBox="0 0 18 18"><path d="M4 4l9 9M13 4l-9 9" stroke="#000" stroke-width="2"/></svg></button>
  </div>
</nav>

<div class="d-flex" role="toolbar" aria-label="标准">
  <div class="hbar d-flex align-items-center">
    <span class="hgrip"></span>
    <button class="btn tb" aria-label="新建设计"><svg class="ic"><use href="#page1"/></svg></button>
    <button class="btn tb" aria-label="新建图纸"><svg class="ic"><use href="#page2"/></svg></button>
    <button class="btn tb" aria-label="打开"><svg class="ic"><use href="#open"/></svg></button>
    <button class="btn tb" aria-label="保存"><svg class="ic"><use href="#save"/></svg></button>
    <span class="hsep"></span>
    <button class="btn tb" aria-label="撤销"><svg class="ic"><use href="#undo"/></svg></button>
    <button class="btn tb" aria-label="重做" disabled><svg class="ic"><use href="#redo"/></svg></button>
    <span class="hsep"></span>
    <button class="btn tb" aria-label="三维球" disabled><svg class="ic"><use href="#spinbox"/></svg></button>
    <button class="btn tb" aria-label="装配" disabled><svg class="ic"><use href="#boxes"/></svg></button>
    <button class="btn tb" aria-label="解除装配" disabled><svg class="ic"><use href="#boxes2"/></svg></button>
    <span class="hsep"></span>
    <button class="btn tb pressed" aria-label="设计树"><svg class="ic"><use href="#finder"/></svg></button>
    <span class="hsep"></span>
    <button class="btn tb" aria-label="帮助"><svg class="ic"><use href="#ask"/></svg></button>
  </div>
  <div class="hbar" style="width:122px"></div>
  <div class="hbar d-flex align-items-center">
    <span class="hgrip"></span>
    <button class="btn tb" aria-label="圆角过渡"><svg class="ic"><use href="#cyl1"/></svg></button>
    <button class="btn tb" aria-label="边倒角"><svg class="ic"><use href="#cyl2"/></svg></button>
    <span class="hsep"></span>
    <button class="btn tb" aria-label="拉伸面"><svg class="ic"><use href="#extr"/></svg></button>
    <button class="btn tb" aria-label="拔模"><svg class="ic"><use href="#swp"/></svg></button>
    <button class="btn tb" aria-label="移动面"><svg class="ic"><use href="#loft"/></svg></button>
    <button class="btn tb" aria-label="等距面" disabled><svg class="ic"><use href="#loft2"/></svg></button>
    <button class="btn tb" aria-label="删除面" disabled><svg class="ic"><use href="#cross"/></svg></button>
    <button class="btn tb" aria-label="编辑半径" disabled><svg class="ic"><use href="#drum"/></svg></button>
    <span class="hsep"></span>
    <button class="btn tb" aria-label="抽壳" disabled><svg class="ic"><use href="#solid"/></svg></button>
    <button class="btn tb" aria-label="分裂" disabled><svg class="ic"><use href="#stack"/></svg></button>
    <button class="btn tb" aria-label="剖视" disabled><svg class="ic"><use href="#hatch"/></svg></button>
  </div>
</div>

<div class="d-flex">
  <div class="hbar d-flex align-items-center border-bottom-0" style="width:428px;padding-left:5px">
    <button class="btn tb pressed" aria-label="选择"><svg class="ic"><use href="#ptr"/></svg></button>
    <button class="btn tb" aria-label="框选"><svg class="ic"><use href="#rectptr"/></svg></button>
    <div class="combo position-relative" style="margin-left:11px"><select aria-label="选择方式"><option>选中: 智能图素</option></select><span class="drop position-absolute"></span></div>
    <div class="combo position-relative" style="margin:0 8px 0 14px"><select aria-label="配置" class="lat"><option>Default</option></select><span class="drop position-absolute"></span></div>
    <button class="btn tb" aria-label="结构"><svg class="ic"><use href="#org"/></svg></button>
  </div>
</div>

<main class="d-flex flex-grow-1">
  <div class="d-flex align-items-start">
    <div class="vcol">
      <div class="vbar d-flex flex-column align-items-center">
        <span class="vgrip"></span>
        <button class="btn tb" aria-label="平移"><svg class="ic"><use href="#pan"/></svg></button>
        <button class="btn tb" aria-label="旋转"><svg class="ic"><use href="#orbit"/></svg></button>
        <button class="btn tb" aria-label="前后缩放"><svg class="ic"><use href="#dolly"/></svg></button>
        <button class="btn tb" aria-label="任意视向"><svg class="ic"><use href="#walk"/></svg></button>
        <span class="vsep"></span>
        <button class="btn tb" aria-label="缩放"><svg class="ic"><use href="#zoom"/></svg></button>
        <button class="btn tb" aria-label="窗口缩放"><svg class="ic"><use href="#zoomwin"/></svg></button>
        <button class="btn tb" aria-label="指定面"><svg class="ic"><use href="#boxarrow"/></svg></button>
        <button class="btn tb" aria-label="指定中心"><svg class="ic"><use href="#target"/></svg></button>
        <span class="vsep"></span>
        <button class="btn tb" aria-label="全屏显示"><svg class="ic"><use href="#fit"/></svg></button>
        <button class="btn tb" aria-label="保存视向"><svg class="ic"><use href="#cam"/></svg></button>
        <button class="btn tb" aria-label="恢复视向" disabled><svg class="ic"><use href="#camg"/></svg></button>
        <button class="btn tb" aria-label="取消视向"><svg class="ic"><use href="#cam2"/></svg></button>
        <span class="vsep"></span>
        <button class="btn tb pressed" aria-label="透视"><svg class="ic"><use href="#persp"/></svg></button>
      </div>
      <div class="vbar d-flex flex-column align-items-center">
        <span class="vgrip"></span>
        <button class="btn tb" aria-label="三维曲线"><svg class="ic"><use href="#crank"/></svg></button>
        <button class="btn tb" aria-label="曲面"><svg class="ic"><use href="#surf"/></svg></button>
        <button class="btn tb" aria-label="基准"><svg class="ic"><use href="#planes"/></svg></button>
        <button class="btn tb" aria-label="等距平面"><svg class="ic"><use href="#plane3"/></svg></button>
        <button class="btn tb" aria-label="公式曲线"><svg class="ic"><use href="#fx"/></svg></button>
      </div>
    </div>
    <div class="vcol">
      <div class="vbar spaced d-flex flex-column align-items-center">
        <span class="vgrip"></span>
        <button class="btn tb" aria-label="无约束装配"><svg class="ic"><use href="#dart"/></svg></button>
        <button class="btn tb" aria-label="约束装配" disabled><svg class="ic"><use href="#dartg"/></svg></button>
        <span class="vsep"></span>
        <button class="btn tb" aria-label="拾取零件" disabled><svg class="ic"><use href="#blob"/></svg></button>
        <button class="btn tb" aria-label="拾取特征" disabled><svg class="ic"><use href="#gear"/></svg></button>
        <button class="btn tb" aria-label="拾取面" disabled><svg class="ic"><use href="#ball"/></svg></button>
      </div>
      <div class="vbar d-flex flex-column align-items-center">
        <span class="vgrip"></span>
        <button class="btn tb" aria-label="主视图"><svg class="ic"><use href="#c1"/></svg></button>
        <button class="btn tb" aria-label="俯视图"><svg class="ic"><use href="#c2"/></svg></button>
        <button class="btn tb" aria-label="左视图"><svg class="ic"><use href="#c3"/></svg></button>
        <button class="btn tb" aria-label="右视图"><svg class="ic"><use href="#c4"/></svg></button>
        <button class="btn tb" aria-label="后视图"><svg class="ic"><use href="#c5"/></svg></button>
        <button class="btn tb" aria-label="仰视图"><svg class="ic"><use href="#c6"/></svg></button>
        <button class="btn tb" aria-label="轴测图一"><svg class="ic"><use href="#c7"/></svg></button>
        <button class="btn tb" aria-label="轴测图二"><svg class="ic"><use href="#c8"/></svg></button>
        <button class="btn tb" aria-label="轴测图三"><svg class="ic"><use href="#c9"/></svg></button>
        <button class="btn tb" aria-label="轴测图四"><svg class="ic"><use href="#c10"/></svg></button>
      </div>
      <div class="vbar d-flex flex-column align-items-center">
        <span class="vgrip"></span>
        <button class="btn tb" aria-label="线性标注"><svg class="ic"><use href="#dim1"/></svg></button>
        <button class="btn tb" aria-label="水平标注"><svg class="ic"><use href="#dim2"/></svg></button>
        <button class="btn tb" aria-label="垂直标注"><svg class="ic"><use href="#dim3"/></svg></button>
        <button class="btn tb" aria-label="角度标注"><svg class="ic"><use href="#dim4"/></svg></button>
        <button class="btn tb" aria-label="半径标注"><svg class="ic"><use href="#dim5"/></svg></button>
        <button class="btn tb" aria-label="直径标注"><svg class="ic"><use href="#dim6"/></svg></button>
        <span class="vsep"></span>
        <button class="btn tb" aria-label="文字标注"><svg class="ic"><use href="#dimA"/></svg></button>
      </div>
    </div>
    <div class="vcol">
      <div class="vbar d-flex flex-column align-items-center">
        <span class="vgrip"></span>
        <button class="btn tb" aria-label="网格面"><svg class="ic"><use href="#s1"/></svg></button>
        <button class="btn tb" aria-label="放样面"><svg class="ic"><use href="#s2"/></svg></button>
        <button class="btn tb" aria-label="直纹面"><svg class="ic"><use href="#s3"/></svg></button>
        <button class="btn tb" aria-label="旋转面"><svg class="ic"><use href="#s4"/></svg></button>
        <button class="btn tb" aria-label="边界面"><svg class="ic"><use href="#s5"/></svg></button>
        <button class="btn tb" aria-label="导动面"><svg class="ic"><use href="#s6"/></svg></button>
        <button class="btn tb" aria-label="曲面过渡"><svg class="ic"><use href="#s7"/></svg></button>
        <button class="btn tb" aria-label="曲面延伸"><svg class="ic"><use href="#s8"/></svg></button>
      </div>
      <div class="vbar d-flex flex-column align-items-center">
        <span class="vgrip"></span>
        <button class="btn tb" aria-label="钣金"><svg class="ic"><use href="#k1"/></svg></button>
        <button class="btn tb" aria-label="展开" disabled><svg class="ic"><use href="#k2"/></svg></button>
        <button class="btn tb" aria-label="布尔运算" disabled><svg class="ic"><use href="#k3"/></svg></button>
      </div>
      <div class="vbar d-flex flex-column align-items-center">
        <span class="vgrip"></span>
        <button class="btn tb" aria-label="拉伸"><svg class="ic"><use href="#t1"/></svg></button>
        <button class="btn tb" aria-label="旋转特征"><svg class="ic"><use href="#t2"/></svg></button>
        <button class="btn tb" aria-label="扫描"><svg class="ic"><use href="#t3"/></svg></button>
        <button class="btn tb" aria-label="放样"><svg class="ic"><use href="#t4"/></svg></button>
        <span class="vsep"></span>
        <button class="btn tb" aria-label="文字"><svg class="ic"><use href="#ta"/></svg></button>
        <button class="btn tb" aria-label="二维草图"><svg class="ic"><use href="#th"/></svg></button>
      </div>
    </div>
  </div>

  <aside class="tree d-flex flex-column">
    <ul class="flex-grow-1">
      <li class="root"><svg class="ic"><use href="#scene"/></svg><span class="lat">G:\WinXP(All U:</span></li>
      <li><span class="twig"></span><svg class="ic"><use href="#part"/></svg>零件<span class="num">49</span></li>
      <li><span class="twig"><b></b></span><svg class="ic"><use href="#sect"/></svg>截面工具</li>
      <li><span class="twig"><b></b></span><svg class="ic"><use href="#model"/></svg>模型<span class="num">69</span></li>
      <li><span class="twig"><b></b></span><svg class="ic"><use href="#model"/></svg>模型<span class="num">80</span></li>
      <li><span class="twig"><b></b></span><svg class="ic"><use href="#camera"/></svg>照相机</li>
      <li><span class="twig"><b></b></span><svg class="ic"><use href="#light"/></svg>光源</li>
      <li><span class="twig"><b></b></span><svg class="ic"><use href="#datum"/></svg>基准面</li>
    </ul>
    <div class="sbar d-flex align-items-start me-1">
      <button class="btn sbtn" aria-label="向左"><svg width="8" height="8" viewBox="0 0 8 8"><path d="M6 0L2 4l4 4" fill="none" stroke="#4d6185" stroke-width="2"/></svg></button>
      <span class="thumb ms-1"></span>
      <button class="btn sbtn ms-auto" aria-label="向右"><svg width="8" height="8" viewBox="0 0 8 8"><path d="M2 0l4 4-4 4" fill="none" stroke="#4d6185" stroke-width="2"/></svg></button>
    </div>
  </aside>

  <section class="scene flex-grow-1 position-relative" aria-label="设计环境">
    <svg class="position-absolute top-0 start-0" viewBox="198 109 796 586">
      <g class="wire">
        <!-- left half of the section profiles -->
        <path d="M592 523L395 472V393Q396 350 400 323L412 243Q413 234 420 234L508 251Q515 252 527 272Q538 291 550 293L592 301"/>
        <path d="M592 523L440 463V387Q441 350 445 303L453 238Q455 228 461 230L529 248Q535 250 543 270Q550 291 558 293L592 301"/>
        <path d="M592 523L285 545V473Q288 430 293 387Q302 330 314 293Q318 279 330 279L447 272H477Q487 273 499 283Q516 299 528 302L592 303"/>
        <path d="M592 523L302 561L301 530L305 453L312 387Q319 340 330 300Q333 288 346 288L447 279L477 275Q491 275 501 288Q511 302 524 304L592 304"/>
        <path d="M592 523L428 520L293 518V497Q296 480 313 440Q350 372 400 327Q435 298 452 290Q465 280 477 277Q492 277 500 290Q512 303 526 304H592"/>
        <path d="M592 523L308 504V483Q311 466 323 437Q350 376 400 326Q435 298 447 291Q460 282 470 282H486Q496 283 504 293Q515 306 530 305H592"/>
        <path d="M592 523L413 595L411 577Q422 510 440 457Q455 410 480 367Q500 332 508 318Q516 305 526 303L592 304"/>
        <path d="M592 523L468 603L466 580Q477 505 493 427Q505 380 520 343L535 315Q540 306 547 303H592"/>
        <path d="M592 523L527 452V427L533 353L543 305Q555 261 563 261Q569 262 576 290Q581 308 585 308L592 303"/>
        <path d="M592 523L568 612L567 487L568 317Q575 314 577 300Q581 289 583 289Q583 313 586 312L592 302"/>
        <path d="M592 523L581 453V320L584 275L585 261L587 290L588 311L592 302"/>
        <path d="M590 303V400L592 523M592 303V523"/>
        <path d="M543 305Q553 318 560 316Q566 316 575 313L592 303M555 304Q562 315 570 317Q578 313 592 306"/>
        <!-- right half -->
        <path d="M592 523L729 460V400L727 340L722 280L717 238Q716 226 710 228L650 246Q640 249 634 268Q627 290 615 293L592 301"/>
        <path d="M592 523L777 468V420L775 370L766 285L759 243Q757 231 751 231L670 248Q658 251 651 268Q643 289 632 291L592 302"/>
        <path d="M592 523L898 540V480Q895 400 883 353L870 297Q866 275 855 275L695 270Q678 271 667 281Q652 298 640 299L592 303"/>
        <path d="M592 523L886 555V473Q883 430 875 380L858 305Q854 284 842 283L710 274H692Q678 276 670 286Q658 302 640 303L592 303"/>
        <path d="M592 523L838 480V460Q836 445 820 403Q803 366 770 328Q743 297 723 285Q710 277 705 273Q689 277 679 291Q663 300 646 311Q633 319 618 312L592 306"/>
        <path d="M592 523L867 493V473Q860 438 840 400Q815 355 770 317Q745 296 723 282L704 272Q687 278 678 291Q665 303 652 304L592 303"/>
        <path d="M592 523L837 575V550Q823 480 777 403L727 335L698 306Q688 296 677 296Q660 301 642 305L592 304"/>
        <path d="M592 523L795 588V563Q788 510 770 470Q755 430 728 382Q710 346 690 323Q675 301 668 299L592 301"/>
        <path d="M592 523L632 611V500L631 420L627 317L615 304Q608 288 605 288Q602 292 600 312L592 303"/>
        <path d="M592 306L615 313Q630 317 640 310Q650 298 665 300M402 431v1M447 422v1M724 420v1M769 426v1M872 505v1"/>
      </g>
      <!-- axis triad -->
      <path d="M234 657V645" stroke="#7a86d8" stroke-width="2"/><path d="M234 640l4 10h-8z" fill="#1c1c94"/>
      <path d="M234 657h-8" stroke="#60c060" stroke-width="2"/><path d="M216 657l11-3v6z" fill="#108818"/>
      <path d="M234 657l4-1" stroke="#d08080" stroke-width="2"/><path d="M244 655l-9-1 2 6z" fill="#981820"/>
      <g font-family="Liberation Mono, monospace" font-size="10" font-weight="700"><text x="231" y="634" fill="#2020a0">Z</text><text x="207" y="659" fill="#30d040">Y</text><text x="245" y="657" fill="#d02030">X</text></g>
    </svg>
  </section>

  <aside class="catalog d-flex">
    <div class="strip d-flex flex-column align-items-start">
      <button class="btn spin" aria-label="第一页"><svg width="9" height="9" viewBox="0 0 9 9"><path d="M1 0h7v1H1zM4 2h1l4 5H0z"/></svg></button>
      <button class="btn spin" aria-label="上一页"><svg width="9" height="9" viewBox="0 0 9 9"><path d="M4 2h1l4 4H0z"/></svg></button>
      <button class="btn spin" aria-label="下一页"><svg width="9" height="9" viewBox="0 0 9 9"><path d="M4 7h1l4-4H0z"/></svg></button>
      <button class="btn spin mb-1" aria-label="最后一页"><svg width="9" height="9" viewBox="0 0 9 9"><path d="M4 7h1l4-5H0zM1 8h7v1H1z"/></svg></button>
      <button class="vtab active">图素</button>
      <button class="vtab">高级图素</button>
      <button class="vtab">钣金</button>
      <button class="vtab">工具</button>
      <button class="vtab">动画</button>
      <button class="vtab">表面光泽</button>
      <button class="vtab">材质</button>
      <button class="vtab">凸痕</button>
      <button class="vtab">颜色</button>
      <button class="vtab">抽象图案</button>
    </div>
  </aside>
</main>

<div class="lowbars">
  <div class="d-flex" role="toolbar" aria-label="二维绘图">
    <div class="hbar d-flex align-items-center">
      <span class="hgrip lead-grip"></span>
      <button class="btn tb" aria-label="直线" disabled><svg class="ic"><use href="#d1"/></svg></button>
      <button class="btn tb" aria-label="切线" disabled><svg class="ic"><use href="#d2"/></svg></button>
      <button class="btn tb" aria-label="法线" disabled><svg class="ic"><use href="#d3"/></svg></button>
      <span class="hsep"></span>
      <button class="btn tb" aria-label="连续直线" disabled><svg class="ic"><use href="#d4"/></svg></button>
      <button class="btn tb" aria-label="椭圆" disabled><svg class="ic"><use href="#d5"/></svg></button>
      <button class="btn tb" aria-label="矩形" disabled><svg class="ic"><use href="#d6"/></svg></button>
      <span class="hsep"></span>
      <button class="btn tb" aria-label="圆心半径" disabled><svg class="ic"><use href="#r1"/></svg></button>
      <button class="btn tb" aria-label="两点圆" disabled><svg class="ic"><use href="#r2"/></svg></button>
      <button class="btn tb" aria-label="三点圆" disabled><svg class="ic"><use href="#r3"/></svg></button>
      <button class="btn tb" aria-label="一切点圆" disabled><svg class="ic"><use href="#r4"/></svg></button>
      <button class="btn tb" aria-label="两切点圆" disabled><svg class="ic"><use href="#r5"/></svg></button>
      <button class="btn tb" aria-label="三切点圆" disabled><svg class="ic"><use href="#r6"/></svg></button>
      <span class="hsep"></span>
      <button class="btn tb" aria-label="圆弧" disabled><svg class="ic"><use href="#a1"/></svg></button>
      <button class="btn tb" aria-label="圆心圆弧" disabled><svg class="ic"><use href="#a2"/></svg></button>
      <button class="btn tb" aria-label="三点圆弧" disabled><svg class="ic"><use href="#a3"/></svg></button>
      <span class="hsep"></span>
      <button class="btn tb" aria-label="样条" disabled><svg class="ic"><use href="#sp"/></svg></button>
      <span class="hsep"></span>
      <button class="btn tb" aria-label="圆角" disabled><svg class="ic"><use href="#fil"/></svg></button>
      <span class="hsep"></span>
      <button class="btn tb" aria-label="栅格" disabled><svg class="ic"><use href="#grid"/></svg></button>
    </div>
    <div class="hbar d-flex align-items-center">
      <span class="hgrip"></span>
      <button class="btn tb" aria-label="构造线" disabled><svg class="ic"><use href="#dash1"/></svg></button>
      <span class="hsep"></span>
      <button class="btn tb" aria-label="垂直构造线" disabled><svg class="ic"><use href="#dash2"/></svg></button>
      <button class="btn tb" aria-label="水平构造线" disabled><svg class="ic"><use href="#dash3"/></svg></button>
      <button class="btn tb" aria-label="切线构造线" disabled><svg class="ic"><use href="#d2"/></svg></button>
      <button class="btn tb" aria-label="法线构造线" disabled><svg class="ic"><use href="#d3"/></svg></button>
      <button class="btn tb" aria-label="角平分线" disabled><svg class="ic"><use href="#ang"/></svg></button>
    </div>
  </div>
  <div class="d-flex" role="toolbar" aria-label="二维编辑">
    <div class="hbar d-flex align-items-center">
      <span class="hgrip lead-grip"></span>
      <button class="btn tb" aria-label="移动" disabled><svg class="ic"><use href="#e1"/></svg></button>
      <button class="btn tb" aria-label="比例" disabled><svg class="ic"><use href="#e2"/></svg></button>
      <button class="btn tb" aria-label="旋转曲线" disabled><svg class="ic"><use href="#e3"/></svg></button>
      <button class="btn tb" aria-label="镜像" disabled><svg class="ic"><use href="#e4"/></svg></button>
      <button class="btn tb" aria-label="偏置" disabled><svg class="ic"><use href="#e5"/></svg></button>
      <button class="btn tb" aria-label="投影" disabled><svg class="ic"><use href="#e6"/></svg></button>
      <span class="hsep"></span>
      <button class="btn tb" aria-label="打断" disabled><svg class="ic"><use href="#xx"/></svg></button>
      <button class="btn tb" aria-label="延伸" disabled><svg class="ic"><use href="#ext"/></svg></button>
      <button class="btn tb" aria-label="裁剪" disabled><svg class="ic"><use href="#xx2"/></svg></button>
      <span class="hsep"></span>
      <button class="btn tb" aria-label="显示尺寸" disabled><svg class="ic"><use href="#pr1"/></svg></button>
      <button class="btn tb" aria-label="显示端点" disabled><svg class="ic"><use href="#pr2"/></svg></button>
    </div>
    <div class="hbar d-flex align-items-center">
      <span class="hgrip"></span>
      <button class="btn tb" aria-label="垂直约束" disabled><svg class="ic"><use href="#q1"/></svg></button>
      <button class="btn tb" aria-label="相切约束" disabled><svg class="ic"><use href="#q2"/></svg></button>
      <button class="btn tb" aria-label="平行约束" disabled><svg class="ic"><use href="#q3"/></svg></button>
      <button class="btn tb" aria-label="水平约束" disabled><svg class="ic"><use href="#q4"/></svg></button>
      <button class="btn tb" aria-label="竖直约束" disabled><svg class="ic"><use href="#q5"/></svg></button>
      <button class="btn tb" aria-label="同心约束" disabled><svg class="ic"><use href="#q6"/></svg></button>
      <button class="btn tb" aria-label="尺寸约束" disabled><svg class="ic"><use href="#q7"/></svg></button>
      <button class="btn tb" aria-label="等长约束" disabled><svg class="ic"><use href="#q8"/></svg></button>
      <button class="btn tb" aria-label="角度约束" disabled><svg class="ic"><use href="#q9"/></svg></button>
      <button class="btn tb" aria-label="共线约束" disabled><svg class="ic"><use href="#q10"/></svg></button>
    </div>
  </div>
</div>

<footer>
  <div class="statusbar d-flex align-items-center">
    <span class="me-auto">帮助按<span class="lat">F1</span>键</span>
    <span class="pane" style="width:140px">视图尺寸:<span class="lat"> 826 x  588</span></span>
    <span class="pane lat" style="width:133px">mm, deg</span>
    <span class="pane lat" style="width:49px">22:04</span>
  </div>
  <div class="taskedge"></div>
</footer>

<div class="stamp position-absolute"><div>三维网</div><div>3dPortal.cn</div></div>

<div class="ime position-absolute d-flex align-items-center">
  <span>En</span>
  <svg width="68" height="14" viewBox="0 0 68 14"><path d="M3 5h2v3H3zM8 5h3v3H8z" fill="#2c2c90"/><path d="M27 2q2 9-7 9 5-3 7-9z" fill="#901060"/><path d="M34.500 4.500h13v7h-13zM34 7h14M34 9h14M37 4v7M40 4v7M43 4v7M46 4v7" fill="none" stroke="#999"/><path d="M54.500 2.500h9v10h-9zM56 6h6M56 9h6" fill="none" stroke="#555"/><path d="M54 2h10v2H54z" fill="#901060"/></svg>
</div>

<script src="https://cdn.jsdelivr.net/npm/bootstrap@5.3.0/dist/js/bootstrap.bundle.min.js"></script>
</body>
</html>
